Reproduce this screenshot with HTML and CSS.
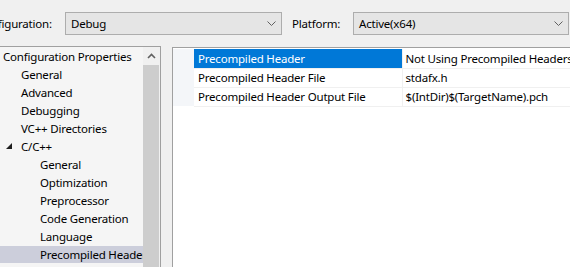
FILE: index.html
```html
<!DOCTYPE html>
<html lang="en">
<head>
  <meta charset="UTF-8">
  <title>Property Pages</title>
  <link rel="stylesheet" href="styles.css">
</head>
<body>
  <div class="toolbar">
    <span class="label cfg-label">Configuration:</span>
    <div class="combo combo-config">
      <span>Debug</span>
      <svg class="chevron" width="9" height="5" viewBox="0 0 9 5"><path d="M0.5 0.5 L4.5 4.5 L8.5 0.5" fill="none" stroke="#606060" stroke-width="1"/></svg>
    </div>
    <span class="label plat-label">Platform:</span>
    <div class="combo combo-platform">
      <span>Active(x64)</span>
      <svg class="chevron" width="9" height="5" viewBox="0 0 9 5"><path d="M0.5 0.5 L4.5 4.5 L8.5 0.5" fill="none" stroke="#606060" stroke-width="1"/></svg>
    </div>
  </div>

  <div class="main">
    <div class="tree">
      <ul class="nodes">
        <li class="lvl0">Configuration Properties</li>
        <li class="lvl1">General</li>
        <li class="lvl1">Advanced</li>
        <li class="lvl1">Debugging</li>
        <li class="lvl1">VC++ Directories</li>
        <li class="lvl1 open"><span class="twisty"></span>C/C++</li>
        <li class="lvl2">General</li>
        <li class="lvl2">Optimization</li>
        <li class="lvl2">Preprocessor</li>
        <li class="lvl2">Code Generation</li>
        <li class="lvl2">Language</li>
        <li class="lvl2 selected">Precompiled Headers</li>
      </ul>
      <div class="scrollbar">
        <div class="arrow">
          <svg width="9" height="6" viewBox="0 0 9 6"><path d="M1 5 L4.5 1.5 L8 5" fill="none" stroke="#606060" stroke-width="1.6"/></svg>
        </div>
        <div class="thumb"></div>
      </div>
    </div>

    <div class="grid">
      <div class="gutter"></div>
      <table class="props">
        <tr class="selected">
          <td class="name">Precompiled Header</td>
          <td class="value">Not Using Precompiled Headers</td>
        </tr>
        <tr>
          <td class="name">Precompiled Header File</td>
          <td class="value">stdafx.h</td>
        </tr>
        <tr>
          <td class="name">Precompiled Header Output File</td>
          <td class="value">$(IntDir)$(TargetName).pch</td>
        </tr>
      </table>
    </div>
  </div>
</body>
</html>
```

FILE: styles.css
```css
* {
  margin: 0;
  padding: 0;
  box-sizing: border-box;
}

body {
  width: 570px;
  height: 267px;
  overflow: hidden;
  background: #f0f0f0;
  font-family: "Noto Sans", sans-serif;
  font-size: 11.5px;
  letter-spacing: -0.2px;
  color: #000;
}

/* top row with the two combos */
.toolbar {
  display: flex;
  align-items: center;
  height: 46px;
  white-space: nowrap;
}
.label {
  flex: none;
}
.cfg-label {
  width: 88px;
  margin-left: -23px;
}
.plat-label {
  width: 61px;
  margin-left: 10px;
}
.combo {
  flex: none;
  display: flex;
  align-items: center;
  justify-content: space-between;
  height: 23px;
  padding: 0 5px 0 5px;
  background: #e5e5e5;
  border: 1px solid #adadad;
}
.combo-config {
  width: 217px;
}
.combo-platform {
  width: 216px;
}
.chevron {
  flex: none;
}

.main {
  display: flex;
  height: 221px;
}

/* left tree */
.tree {
  flex: none;
  display: flex;
  width: 161px;
  border-top: 1px solid #a0a0a0;
  border-right: 1px solid #a0a0a0;
  background: #f5f5f5;
}
.nodes {
  list-style: none;
  width: 143px;
  overflow: hidden;
  white-space: nowrap;
}
.nodes li {
  display: flex;
  align-items: center;
  height: 18px;
}
.lvl0 { padding-left: 3px; }
.lvl1 { padding-left: 21px; }
.lvl2 { padding-left: 40px; }
.nodes li.open {
  padding-left: 6px;
}
.twisty {
  width: 0;
  height: 0;
  margin-right: 9px;
  border-left: 6px solid transparent;
  border-bottom: 6px solid #1e1e1e;
}
.nodes li.selected {
  background: #cccedb;
  margin-top: 1px;
  height: 17px;
}

.scrollbar {
  width: 17px;
  display: flex;
  flex-direction: column;
  background: #f0f0f0;
}
.arrow {
  height: 18px;
  display: flex;
  align-items: center;
  justify-content: center;
}
.thumb {
  flex: 1;
  margin: 0 1px 0 0;
  background: #cdcdcd;
}

/* property grid */
.grid {
  flex: 1;
  display: flex;
  align-items: flex-start;
  margin-left: 11px;
  margin-top: 1px;
  border-top: 1px solid #a0a0a0;
  border-left: 1px solid #a0a0a0;
  background: #fff;
  padding-top: 1px;
  overflow: hidden;
}
.gutter {
  flex: none;
  width: 21px;
  height: 57px;
  background: #f4f6f9;
}
.props {
  border-collapse: collapse;
  table-layout: fixed;
  width: 400px;
  white-space: nowrap;
}
.props td {
  height: 19px;
  border-bottom: 1px solid #f0f0f0;
  overflow: hidden;
  vertical-align: middle;
}
.props .name {
  width: 208px;
  padding-left: 4px;
  border-right: 1px solid #f0f0f0;
}
.props .value {
  padding-left: 3px;
}
.props tr.selected .name {
  background: #0078d7;
  color: #fff;
}
```
